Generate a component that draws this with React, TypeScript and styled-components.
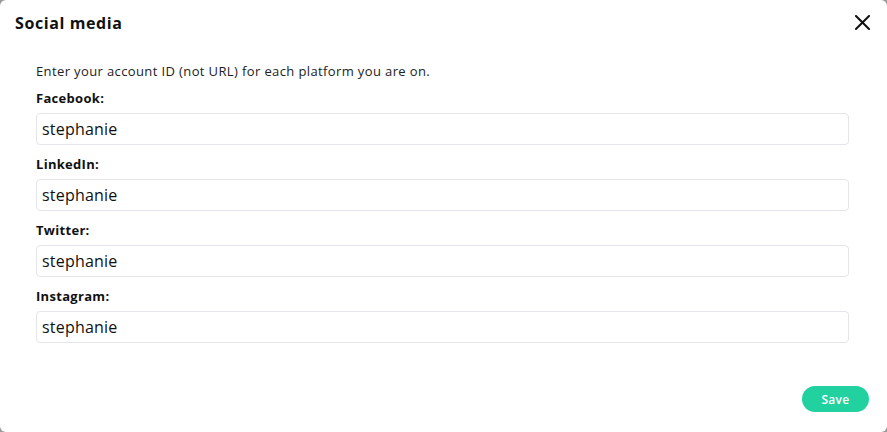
import React from "react";
import styled, { createGlobalStyle } from "styled-components";

const Global = createGlobalStyle`
  html, body { margin: 0; padding: 0; background: #9a9a9a; }
  body { font-family: "Open Sans", "Noto Sans", sans-serif; }
  * { box-sizing: border-box; }
`;

const Modal = styled.div`
  width: 887px;
  height: 432px;
  background: #ffffff;
  border-radius: 6px;
  display: flex;
  flex-direction: column;
  overflow: hidden;
`;

const Header = styled.div`
  display: flex;
  align-items: center;
  justify-content: space-between;
  height: 45px;
  padding: 0 17px 0 15px;
`;

const Title = styled.h1`
  margin: 0;
  font-size: 16px;
  font-weight: 700;
  color: #111;
  letter-spacing: 0.6px;
`;

const CloseButton = styled.button`
  border: none;
  background: none;
  padding: 0;
  width: 16px;
  height: 16px;
  display: flex;
  align-items: center;
  justify-content: center;
  cursor: pointer;
`;

const Body = styled.div`
  flex: 1;
  padding: 17px 38px 0 36px;
  display: flex;
  flex-direction: column;
`;

const Intro = styled.p`
  margin: 0 0 9px;
  font-size: 13px;
  line-height: 18px;
  color: #222;
  letter-spacing: 0.38px;
`;

const Field = styled.div`
  display: flex;
  flex-direction: column;
  margin-bottom: 10px;
`;

const Label = styled.label`
  font-size: 13px;
  font-weight: 700;
  line-height: 18px;
  color: #111;
  margin-bottom: 6px;
  letter-spacing: 0.3px;
`;

const Input = styled.input`
  height: 32px;
  border: 1px solid #e4e4ec;
  border-radius: 4px;
  padding: 0 5px;
  font-family: inherit;
  font-size: 16px;
  color: #111;
  outline: none;
  letter-spacing: 0.2px;
`;

const Footer = styled.div`
  display: flex;
  justify-content: flex-end;
  padding: 0 18px 20px;
`;

const SaveButton = styled.button`
  width: 67px;
  height: 26px;
  border: none;
  border-radius: 13px;
  background: #22d1a0;
  color: #fff;
  font-family: inherit;
  font-size: 12px;
  font-weight: 600;
  letter-spacing: 0.3px;
  cursor: pointer;
`;

const fields = ["Facebook", "LinkedIn", "Twitter", "Instagram"];

export default function App() {
  return (
    <>
      <Global />
      <Modal>
        <Header>
          <Title>Social media</Title>
          <CloseButton aria-label="Close">
            <svg width="15" height="15" viewBox="0 0 15 15">
              <path d="M1 1L14 14M14 1L1 14" stroke="#111" strokeWidth="2" strokeLinecap="square" />
            </svg>
          </CloseButton>
        </Header>
        <Body>
          <Intro>Enter your account ID (not URL) for each platform you are on.</Intro>
          {fields.map((f) => (
            <Field key={f}>
              <Label>{f}:</Label>
              <Input defaultValue="stephanie" />
            </Field>
          ))}
        </Body>
        <Footer>
          <SaveButton>Save</SaveButton>
        </Footer>
      </Modal>
    </>
  );
}
